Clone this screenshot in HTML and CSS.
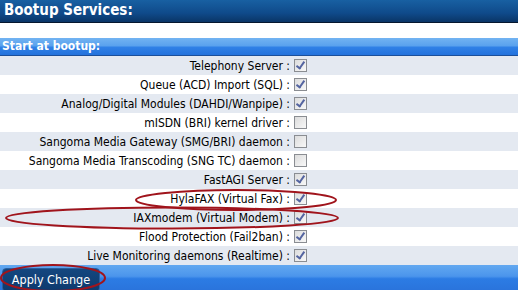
FILE: index.html
```html
<!DOCTYPE html>
<html lang="en">
<head>
  <meta charset="UTF-8">
  <title>Bootup Services</title>
  <link rel="stylesheet" href="styles.css">
</head>
<body>
  <div class="title-bar">Bootup Services:</div>

  <div class="panel">
    <div class="section-head">Start at bootup:</div>
    <table class="services">
      <tbody>
        <tr><td class="label">Telephony Server :</td><td><span class="box on"></span></td></tr>
        <tr><td class="label">Queue (ACD) Import (SQL) :</td><td><span class="box on"></span></td></tr>
        <tr><td class="label">Analog/Digital Modules (DAHDI/Wanpipe) :</td><td><span class="box on"></span></td></tr>
        <tr><td class="label">mISDN (BRI) kernel driver :</td><td><span class="box"></span></td></tr>
        <tr><td class="label">Sangoma Media Gateway (SMG/BRI) daemon :</td><td><span class="box"></span></td></tr>
        <tr><td class="label">Sangoma Media Transcoding (SNG TC) daemon :</td><td><span class="box"></span></td></tr>
        <tr><td class="label">FastAGI Server :</td><td><span class="box on"></span></td></tr>
        <tr><td class="label">HylaFAX (Virtual Fax) :</td><td><span class="box on"></span></td></tr>
        <tr><td class="label">IAXmodem (Virtual Modem) :</td><td><span class="box on"></span></td></tr>
        <tr><td class="label">Flood Protection (Fail2ban) :</td><td><span class="box on"></span></td></tr>
        <tr><td class="label">Live Monitoring daemons (Realtime) :</td><td><span class="box on"></span></td></tr>
      </tbody>
    </table>
    <div class="footer">
      <button type="button" class="apply">Apply Change</button>
    </div>

    <!-- red annotation rings drawn over the screenshot -->
    <svg class="marks" width="518" height="252" viewBox="0 0 518 252">
      <ellipse cx="236" cy="162" rx="100" ry="10" />
      <ellipse cx="172" cy="180" rx="166" ry="10.5" />
      <ellipse cx="53" cy="240" rx="52" ry="13" />
    </svg>
  </div>
</body>
</html>
```

FILE: styles.css
```css
body {
  margin: 0;
  background-color: #fff;
  font-family: "DejaVu Sans Condensed", "DejaVu Sans", sans-serif;
  font-size: 11px;
  color: #000;
  overflow: hidden;
}
.title-bar {
  height: 22px;
  line-height: 21px;
  padding-left: 4px;
  background: linear-gradient(#1860a2, #0f4a8a 60%, #0a3566);
  border-bottom: 1px solid #06172e;
  color: #fff;
  font-weight: bold;
  font-size: 15px;
}
.panel {
  position: relative;
  margin-top: 15px;
}
.section-head {
  height: 17px;
  line-height: 17px;
  padding-left: 2px;
  background: linear-gradient(#72b3f2, #5aa2ee 45%, #2f80e6 55%, #2472dc);
  border-bottom: 1px solid #1b4f9a;
  color: #fff;
  font-weight: bold;
  font-size: 12px;
}
.services {
  width: 100%;
  border-collapse: collapse;
}
.services td {
  height: 19px;
  padding: 0;
}
.services tr:nth-child(odd) {
  background-color: #e4e9f1;
}
.services tr:nth-child(even) {
  background-color: #fff;
}
.label {
  width: 290px;
  text-align: right;
  padding-right: 2px !important;
  white-space: nowrap;
  font-size: 12px;
}
.box {
  display: block;
  width: 11px;
  height: 11px;
  margin-left: 2px;
  border: 1px solid #8a8d92;
  background: linear-gradient(135deg, #dcdcdc, #f8f8f8);
  position: relative;
}
.box.on::after {
  content: "";
  position: absolute;
  left: 3px;
  top: 0px;
  width: 3px;
  height: 7px;
  border-right: 2px solid #5464a0;
  border-bottom: 2px solid #5464a0;
  transform: rotate(35deg);
}
.footer {
  height: 25px;
  overflow: hidden;
  background: linear-gradient(#62a8f0, #4b95ec 45%, #2c7ce4 55%, #2a74dc);
  padding-top: 3px;
  box-sizing: border-box;
}
.apply {
  margin-left: 2px;
  width: 98px;
  height: 24px;
  padding: 0 0 2px 0;
  border: 1px solid #2a5fa0;
  border-radius: 4px;
  background: linear-gradient(#14477f, #0d3a6e);
  color: #fff;
  font-family: "DejaVu Sans Condensed", "DejaVu Sans", sans-serif;
  font-size: 12.5px;
}
.marks {
  position: absolute;
  left: 0;
  top: 0;
  pointer-events: none;
}
.marks ellipse {
  fill: none;
  stroke: #a0141c;
  stroke-width: 2;
}
```
